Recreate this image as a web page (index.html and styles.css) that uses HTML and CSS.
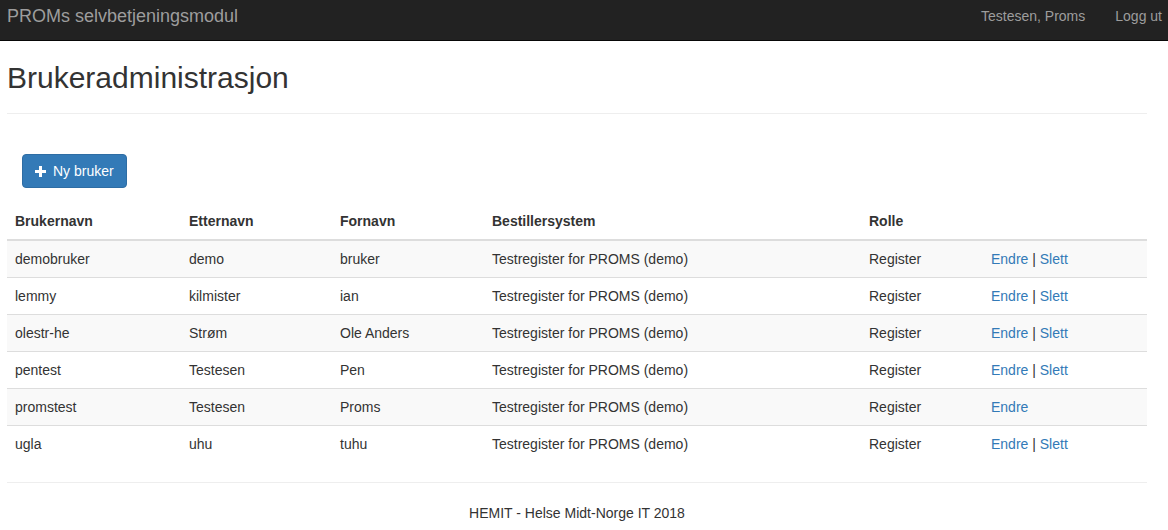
FILE: index.html
```html
<!DOCTYPE html>
<html lang="no">
<head>
<meta charset="utf-8">
<title>Brukeradministrasjon</title>
<link rel="stylesheet" href="styles.css">
</head>
<body>
<header class="navbar">
  <a class="brand" href="#">PROMs selvbetjeningsmodul</a>
  <nav class="nav-right">
    <a href="#">Testesen, Proms</a>
    <a href="#">Logg ut</a>
  </nav>
</header>
<main class="container">
  <h2 class="page-title">Brukeradministrasjon</h2>
  <hr class="rule">
  <div class="actions">
    <a class="btn-primary" href="#"><svg class="plus" width="11" height="11" viewBox="0 0 11 11"><rect x="4" y="0" width="3" height="11" fill="#fff"/><rect x="0" y="4" width="11" height="3" fill="#fff"/></svg>Ny bruker</a>
  </div>
  <table class="table">
    <colgroup>
      <col class="c1"><col class="c2"><col class="c3"><col class="c4"><col class="c5"><col class="c6">
    </colgroup>
    <thead>
      <tr><th>Brukernavn</th><th>Etternavn</th><th>Fornavn</th><th>Bestillersystem</th><th>Rolle</th><th></th></tr>
    </thead>
    <tbody>
      <tr><td>demobruker</td><td>demo</td><td>bruker</td><td>Testregister for PROMS (demo)</td><td>Register</td><td><a href="#">Endre</a> | <a href="#">Slett</a></td></tr>
      <tr><td>lemmy</td><td>kilmister</td><td>ian</td><td>Testregister for PROMS (demo)</td><td>Register</td><td><a href="#">Endre</a> | <a href="#">Slett</a></td></tr>
      <tr><td>olestr-he</td><td>Strøm</td><td>Ole Anders</td><td>Testregister for PROMS (demo)</td><td>Register</td><td><a href="#">Endre</a> | <a href="#">Slett</a></td></tr>
      <tr><td>pentest</td><td>Testesen</td><td>Pen</td><td>Testregister for PROMS (demo)</td><td>Register</td><td><a href="#">Endre</a> | <a href="#">Slett</a></td></tr>
      <tr><td>promstest</td><td>Testesen</td><td>Proms</td><td>Testregister for PROMS (demo)</td><td>Register</td><td><a href="#">Endre</a></td></tr>
      <tr><td>ugla</td><td>uhu</td><td>tuhu</td><td>Testregister for PROMS (demo)</td><td>Register</td><td><a href="#">Endre</a> | <a href="#">Slett</a></td></tr>
    </tbody>
  </table>
  <hr class="rule">
  <footer class="footer">
    <p>HEMIT - Helse Midt-Norge IT 2018</p>
  </footer>
</main>
</body>
</html>
```

FILE: styles.css
```css
* { box-sizing: border-box; }
html, body { margin: 0; padding: 0; }
body {
  font-family: "Liberation Sans", Arial, Helvetica, sans-serif;
  font-size: 14px;
  line-height: 20px;
  color: #333;
  background: #fff;
}
a { color: #337ab7; text-decoration: none; }

.navbar {
  display: flex;
  align-items: flex-start;
  justify-content: space-between;
  height: 41px;
  background: #222;
  border-bottom: 1px solid #080808;
  padding: 0 6px 0 7px;
}
.brand {
  color: #9d9d9d;
  font-size: 18px;
  line-height: 20px;
  padding-top: 6px;
}
.nav-right {
  display: flex;
  gap: 30px;
  padding-top: 6px;
}
.nav-right a {
  color: #9d9d9d;
  font-size: 14px;
  line-height: 20px;
}

.container {
  width: 1147px;
  padding-left: 7px;
}
.page-title {
  font-size: 30px;
  font-weight: 500;
  line-height: 33px;
  margin: 20px 0 0;
}
.rule {
  border: 0;
  border-top: 1px solid #eee;
  margin: 19px 0 20px;
  height: 0;
}
.actions {
  padding: 20px 15px 0;
  margin-bottom: 15px;
}
.btn-primary {
  display: inline-flex;
  align-items: center;
  height: 34px;
  padding: 6px 12px;
  background: #337ab7;
  border: 1px solid #2e6da4;
  border-radius: 4px;
  color: #fff;
  font-size: 14px;
  line-height: 20px;
}
.plus { margin: 0 7px 0 0; }

.table {
  width: 1140px;
  table-layout: fixed;
  border-collapse: collapse;
  border-spacing: 0;
  margin-bottom: 20px;
}
.c1 { width: 174px; }
.c2 { width: 151px; }
.c3 { width: 152px; }
.c4 { width: 377px; }
.c5 { width: 122px; }
.c6 { width: 164px; }
.table th, .table td {
  padding: 8px;
  line-height: 20px;
  text-align: left;
  vertical-align: top;
}
.table th {
  font-weight: bold;
  vertical-align: bottom;
  border-bottom: 2px solid #ddd;
}
.table td { border-top: 1px solid #ddd; }
.table tbody tr:nth-child(odd) { background: #f9f9f9; }

.footer p {
  margin: 0;
  text-align: center;
}
.table + .rule { margin-top: 0; }
```
